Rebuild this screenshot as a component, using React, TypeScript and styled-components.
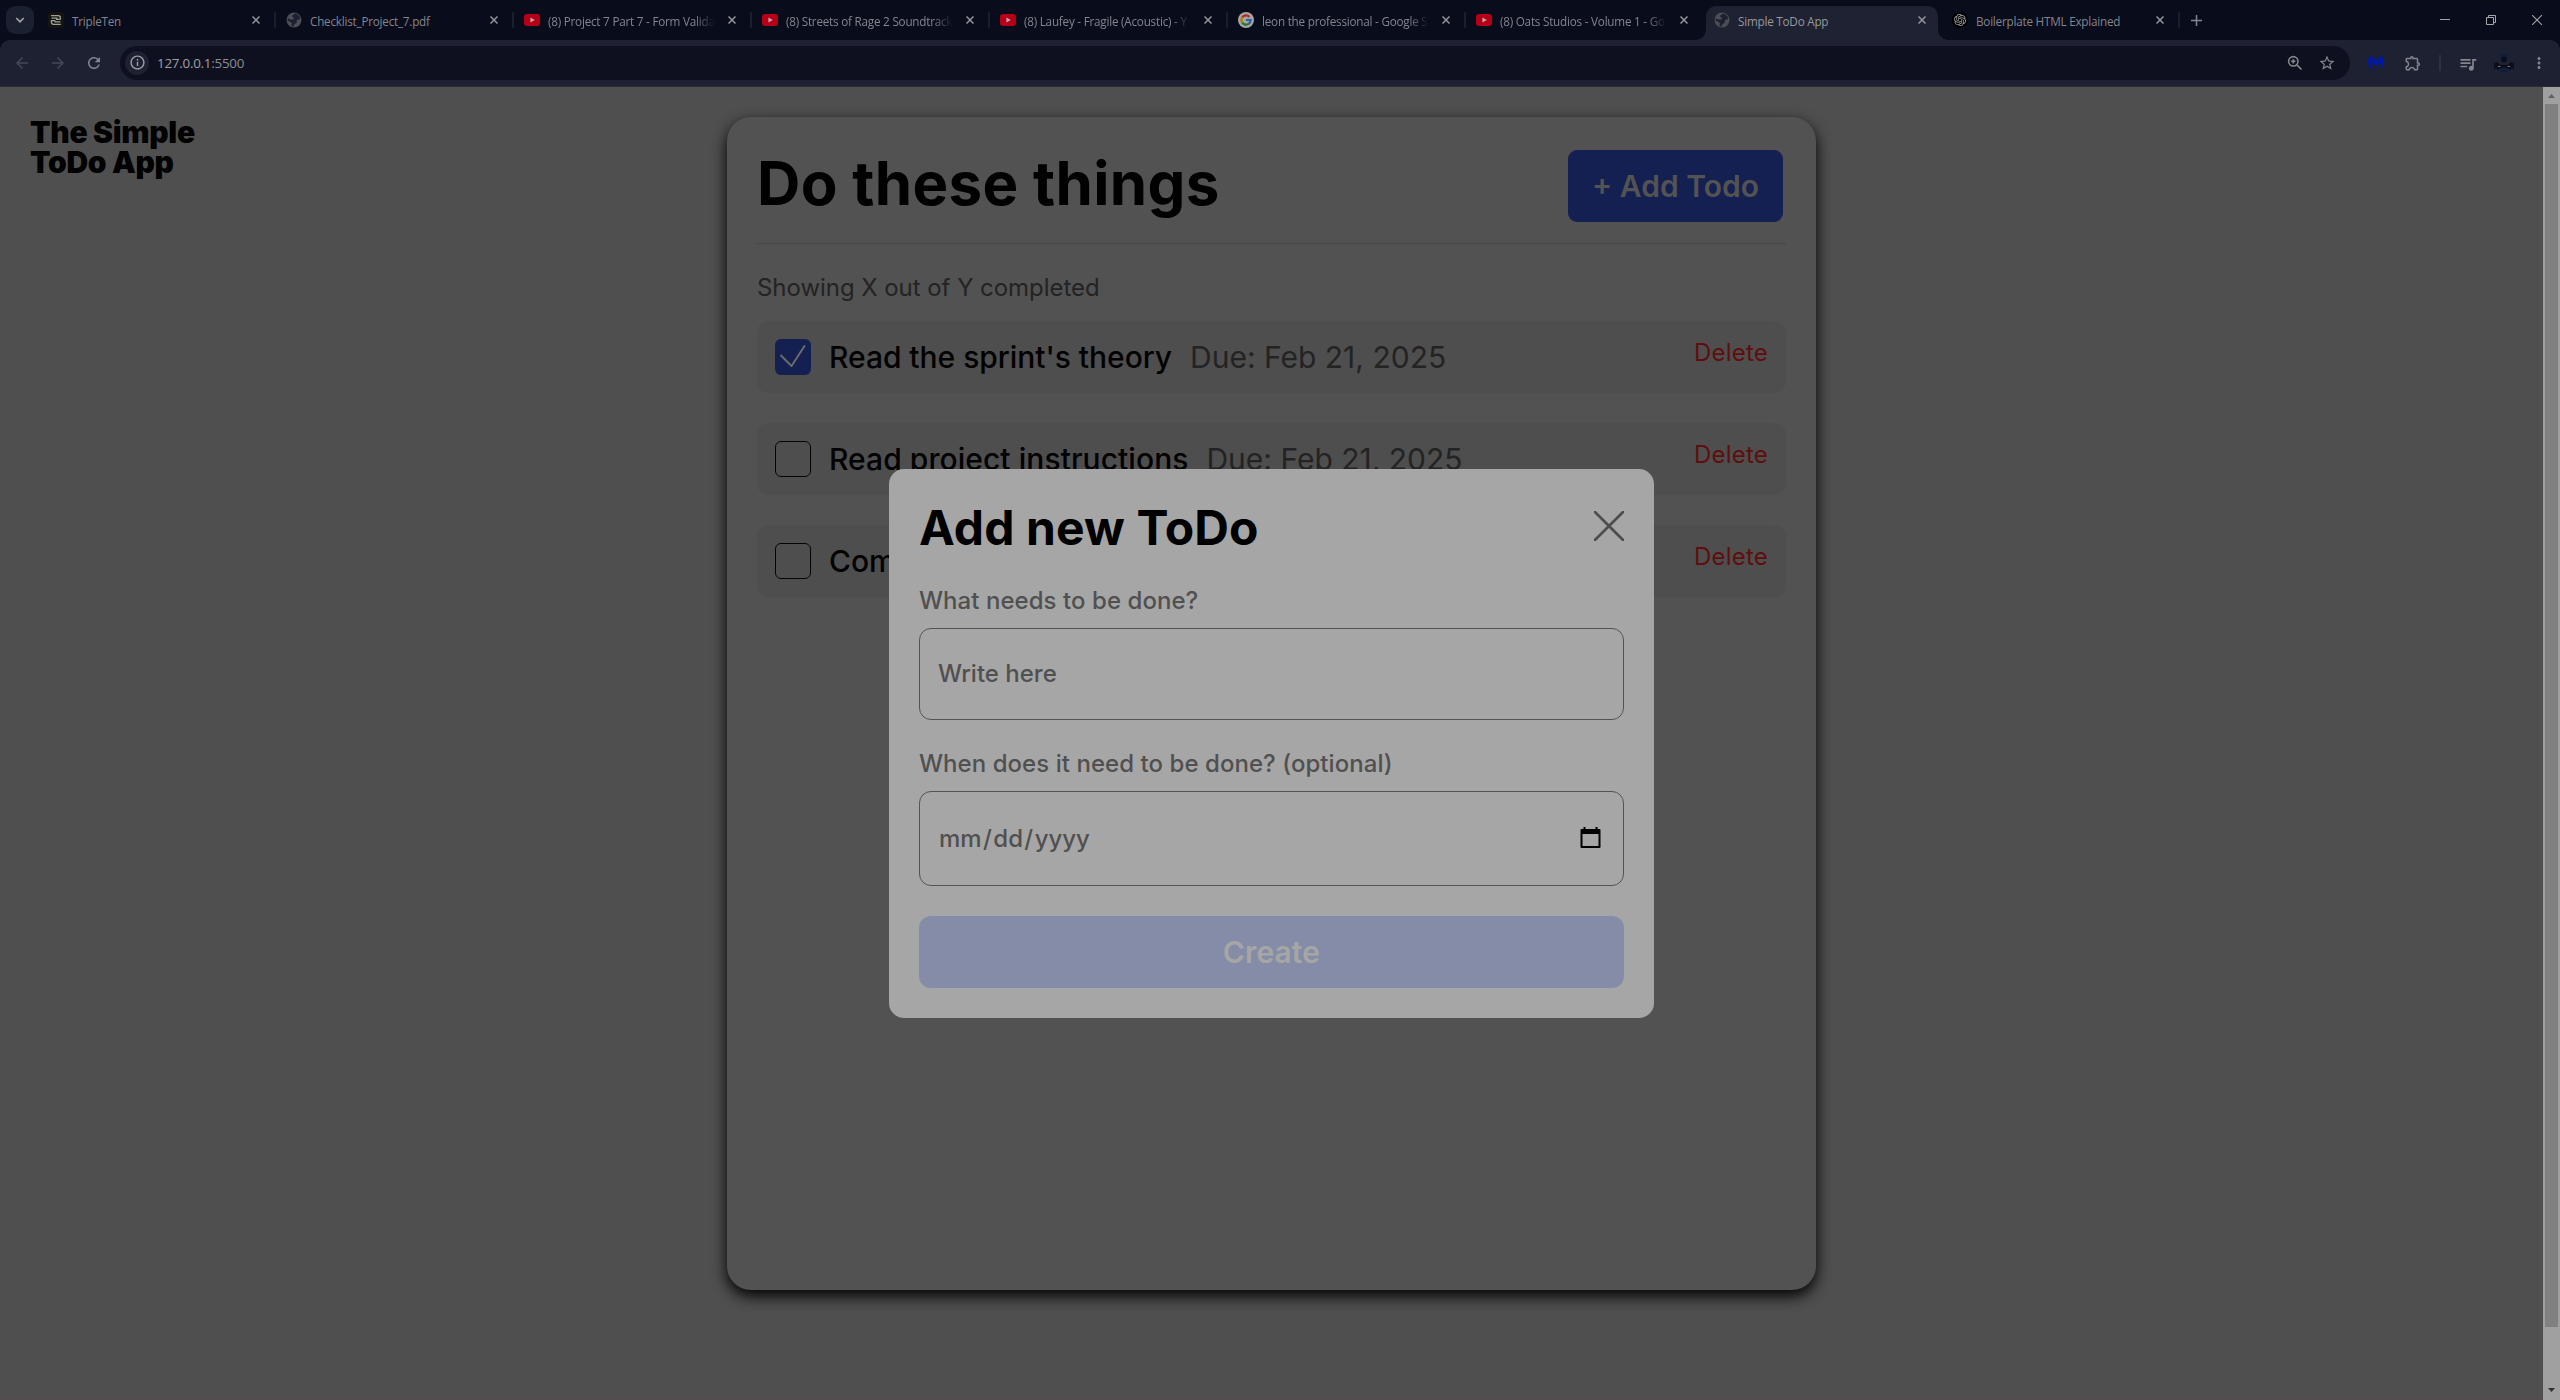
import React from "react";
import styled, { createGlobalStyle, css } from "styled-components";
import { MdOutlineExtension, MdQueueMusic, MdStarBorder, MdRefresh, MdArrowBack, MdArrowForward, MdOutlineInfo, MdMoreVert } from "react-icons/md";
import { SiOpenai, SiMalwarebytes } from "react-icons/si";

const GlobalStyle = createGlobalStyle`
  * { box-sizing: border-box; }
  body { margin: 0; overflow: hidden; font-family: Inter, "Liberation Sans", sans-serif; }
  h1, h2, p, ul { margin: 0; padding: 0; font-weight: inherit; }
`;

const Window = styled.div`
  display: flex;
  flex-direction: column;
  width: 2560px;
  height: 1400px;
  background: #4f4f4f;
`;

/* ---------- browser chrome ---------- */

const TabStrip = styled.div`
  display: flex;
  align-items: flex-start;
  height: 40px;
  padding: 6px 0 0 6px;
  background: #090c1a;
  font-family: "Open Sans", "Noto Sans", sans-serif;
`;

const TabSearch = styled.div`
  display: grid;
  place-items: center;
  width: 28px;
  height: 28px;
  margin-right: 6px;
  border-radius: 9px;
  background: #1b2030;
`;

const TabBox = styled.div<{ $active?: boolean }>`
  position: relative;
  display: flex;
  align-items: center;
  width: 232px;
  height: 34px;
  margin-right: 6px;
  padding: 0 8px 6px 8px;
  border-radius: 10px 10px 0 0;
  color: ${(p) => (p.$active ? "#99999d" : "#83858f")};
  background: ${(p) => (p.$active ? "#1e2232" : "transparent")};
  ${(p) =>
    p.$active &&
    css`
      &::before,
      &::after {
        content: "";
        position: absolute;
        bottom: 0;
        width: 10px;
        height: 10px;
      }
      &::before {
        left: -10px;
        background: radial-gradient(circle at 0 0, transparent 9.5px, #1e2232 10px);
      }
      &::after {
        right: -10px;
        background: radial-gradient(circle at 100% 0, transparent 9.5px, #1e2232 10px);
      }
    `}
`;

const Favicon = styled.span`
  display: grid;
  place-items: center;
  flex: none;
  width: 16px;
  height: 16px;
  margin-right: 8px;
`;

const TabTitle = styled.span<{ $fade?: boolean }>`
  flex: 1;
  height: 18px;
  margin-top: 2px;
  overflow: hidden;
  white-space: nowrap;
  font-size: 11.7px;
  line-height: 18px;
  letter-spacing: -0.22px;
  ${(p) => p.$fade && "mask-image: linear-gradient(to right, #000 88%, transparent);"}
`;

const TabClose = styled.span`
  display: grid;
  place-items: center;
  width: 16px;
  height: 16px;
  margin-left: 9px;
  flex: none;
`;

const TabDivider = styled.span<{ $hidden?: boolean }>`
  width: 2px;
  height: 16px;
  margin: 6px 2px 0 -4px;
  background: ${(p) => (p.$hidden ? "transparent" : "#1b1e2e")};
`;

const TabSlot = styled.div`
  display: flex;
  width: 238px;
  flex: none;
`;

const NewTab = styled.div`
  display: grid;
  place-items: center;
  width: 28px;
  height: 28px;
`;

const WindowControls = styled.div`
  display: flex;
  align-items: center;
  gap: 36px;
  height: 28px;
  margin-left: auto;
  padding-right: 18px;
`;

const Toolbar = styled.div`
  display: flex;
  align-items: center;
  height: 47px;
  padding: 0 12px 1px 12px;
  background: #1d2132;
  border-bottom: 1px solid #292d38;
  border-radius: 10px 10px 0 0;
  color: #83858f;
`;

const ToolbarBack = styled.div`
  background: #090c1a;
`;

const NavButtons = styled.div`
  display: flex;
  gap: 16px;
  width: 108px;
`;

const NavIcon = styled.span<{ $dim?: boolean }>`
  display: grid;
  place-items: center;
  width: 20px;
  height: 20px;
  font-size: 18px;
  color: ${(p) => (p.$dim ? "#454955" : "#83858f")};
`;

const Omnibox = styled.div`
  display: flex;
  align-items: center;
  width: 2230px;
  height: 34px;
  padding: 0 14px 0 5px;
  border-radius: 17px;
  background: #0e1020;
  color: #85878d;
`;

const SiteInfo = styled.span`
  display: grid;
  place-items: center;
  width: 24px;
  height: 24px;
  margin-right: 8px;
  border-radius: 50%;
  background: #1d2132;
  color: #a0a0a3;
  font-size: 17px;
`;

const Url = styled.span`
  flex: 1;
  color: #a0a0a3;
  font: 13.4px/20px "Open Sans", "Noto Sans", sans-serif;
  letter-spacing: -0.25px;

  em {
    font-style: normal;
    color: #8b8d95;
  }
`;

const OmniActions = styled.span`
  display: flex;
  align-items: center;
  gap: 15px;
  font-size: 18px;
`;

const Extensions = styled.div`
  display: flex;
  align-items: center;
  flex: 1;
  padding-left: 17px;
`;

const ExtIcon = styled.span<{ $gap: number }>`
  display: grid;
  place-items: center;
  width: 18px;
  height: 18px;
  margin-right: ${(p) => p.$gap}px;
  font-size: 18px;
`;

const ExtDivider = styled.span`
  width: 2px;
  height: 16px;
  margin-right: 17px;
  background: #2d3140;
`;

/* ---------- page ---------- */

const Viewport = styled.div`
  display: flex;
  height: 1313px;
  background: #4f4f4f;
`;

const Page = styled.main`
  position: relative;
  width: 2543px;
  padding: 30px;
  border-bottom: 1px solid #544a4d;
`;

const Logo = styled.div`
  position: absolute;
  left: 30px;
  top: 30px;
  color: #010101;
  font-size: 30px;
  font-weight: 900;
  line-height: 30px;
  letter-spacing: -0.3px;
`;

const Card = styled.section`
  width: 1089px;
  height: 1173px;
  margin: 0 auto;
  padding: 33px 30px 0;
  border-radius: 24px;
  background: #525252;
  box-shadow: 0 6px 15px #000;
`;

const CardHeader = styled.header`
  display: flex;
  justify-content: space-between;
  height: 94px;
  padding-right: 3px;
  border-bottom: 1px solid #464646;
`;

const CardTitle = styled.h1`
  color: #010101;
  font-size: 60px;
  font-weight: 700;
  line-height: 66px;
  letter-spacing: 0.33px;
`;

const AddButton = styled.button`
  width: 215px;
  height: 72px;
  padding: 0;
  border: 0;
  border-radius: 9px;
  background: #142052;
  color: #535353;
  font: 600 30px/36px Inter, sans-serif;
`;

const Counter = styled.p`
  margin-top: 29px;
  height: 48px;
  color: #232323;
  font-size: 24px;
  line-height: 30px;
  letter-spacing: -0.05px;
`;

const TodoList = styled.ul`
  display: flex;
  flex-direction: column;
  gap: 30px;
  list-style: none;
`;

const TodoRow = styled.li`
  display: flex;
  align-items: center;
  height: 72px;
  padding: 0 18px;
  border-radius: 12px;
  background: #4e4e4e;
  font-size: 30px;
  line-height: 36px;
`;

const Checkbox = styled.span<{ $checked?: boolean }>`
  display: grid;
  place-items: center;
  width: 36px;
  height: 36px;
  margin-right: 18px;
  border: ${(p) => (p.$checked ? "0" : "1px solid #050505")};
  border-radius: 6px;
  background: ${(p) => (p.$checked ? "#142052" : "transparent")};
`;

const TodoName = styled.span<{ $track: number }>`
  margin-right: 18px;
  color: #010101;
  font-weight: 500;
  letter-spacing: ${(p) => p.$track}px;
`;

const TodoDate = styled.span`
  color: #232323;
`;

const DeleteButton = styled.button`
  align-self: flex-start;
  margin: 17px 0 0 auto;
  padding: 0;
  border: 0;
  background: none;
  color: #5e0e0e;
  font: 400 24px/30px Inter, sans-serif;
  letter-spacing: 0.2px;
`;

/* ---------- popup ---------- */

const Popup = styled.form`
  position: absolute;
  left: 889px;
  top: 382px;
  width: 765px;
  height: 549px;
  padding: 30px;
  border-radius: 15px;
  background: #a6a6a6;
  color: #505050;
`;

const PopupHeader = styled.header`
  display: flex;
  justify-content: space-between;
  align-items: flex-start;
  height: 86px;
`;

const PopupTitle = styled.h2`
  color: #000;
  font-size: 48px;
  font-weight: 700;
  line-height: 58px;
  letter-spacing: 0.1px;
`;

const CloseIcon = styled.svg`
  margin-top: 12px;
`;

const Field = styled.label`
  display: block;
  font-size: 24px;
  font-weight: 500;
  line-height: 32px;
  letter-spacing: 0.05px;
`;

const FieldBox = styled.span<{ $h: number; $gap: number }>`
  display: flex;
  align-items: center;
  justify-content: space-between;
  height: ${(p) => p.$h}px;
  margin: 11px 0 ${(p) => p.$gap}px;
  padding: 0 22px 0 18px;
  border: 1px solid #535353;
  border-radius: 12px;
  letter-spacing: 0;
`;

const DateParts = styled.span`
  display: flex;
  padding-left: 1px;

  span {
    padding-right: 1.4px;
  }
`;

const CalendarIcon = styled.svg`
  margin: 0 0 2px;
`;

const CreateButton = styled.button`
  display: block;
  width: 100%;
  height: 72px;
  border: 0;
  border-radius: 12px;
  background: #858ca7;
  color: #a6a6a6;
  font: 600 30px/36px Inter, sans-serif;
  letter-spacing: 0.1px;
`;

/* ---------- scrollbar ---------- */

const Scrollbar = styled.div`
  display: flex;
  flex-direction: column;
  align-items: center;
  width: 17px;
  background: #a0a0a0;
`;

const ScrollArrow = styled.svg`
  flex: none;
  width: 17px;
  height: 17px;
`;

const Thumb = styled.div`
  width: 13px;
  height: 1223px;
  margin-bottom: auto;
  background: #808080;
`;

type Kind = "tripleten" | "globe" | "youtube" | "google" | "openai";

function TabIcon({ kind }: { kind: Kind }) {
  if (kind === "youtube")
    return (
      <svg width="16" height="16" viewBox="0 0 16 16">
        <rect x="0" y="2" width="16" height="12" rx="3" fill="#b50018" />
        <path d="M6.4 5.4v5.2L10.8 8z" fill="#c4a5a8" />
      </svg>
    );
  if (kind === "google")
    return (
      <svg width="16" height="16" viewBox="0 0 16 16" fill="none" strokeWidth="2.2">
        <circle cx="8" cy="8" r="8" fill="#a5a5a5" />
        <path d="M11.400 4.900A4.600 4.600 0 0 0 4.200 5.400" stroke="#b02c22" />
        <path d="M4.200 5.400a4.600 4.600 0 0 0 0 5.200" stroke="#b08000" />
        <path d="M4.200 10.600a4.600 4.600 0 0 0 6.800.900" stroke="#23762f" />
        <path d="M8 8h4.600q0 2.300-1.600 3.500" stroke="#2a5cb0" />
      </svg>
    );
  if (kind === "openai")
    return (
      <svg width="16" height="16" viewBox="0 0 16 16">
        <circle cx="8" cy="8" r="8" fill="#000" />
        <g color="#a5a5a5" transform="translate(2 2)">
          <SiOpenai size={12} />
        </g>
      </svg>
    );
  if (kind === "tripleten")
    return (
      <svg width="16" height="16" viewBox="0 0 16 16" fill="none" stroke="#a0a09a" strokeWidth="1.3">
        <rect width="16" height="16" rx="3.5" fill="#15140f" stroke="none" />
        <path d="M3 3.700h7.200a2.200 2.200 0 0 1 2.200 2.200v1.300M3.500 6.100h6M12.800 12.300H5.600a2.200 2.200 0 0 1-2.200-2.200V8.600h4M12.500 9.900H6.500M8 7.400h4.500" />
      </svg>
    );
  return (
    <svg width="16" height="16" viewBox="0 0 16 16">
      <circle cx="8" cy="8" r="7.500" fill="#4b4e54" />
      <path d="M9.300 1.500 6.500 3.200 6.200 5 8 5.800 7.500 7.500H4.600L2 6.500 1.500 8.800l2.500.700 1.800 1.700L5.600 14l1.900.500 1-2.500 2.300-1.300-.3-1.900 1.700-1.300 1.800-.300-.400-2.700-2.100-1.900z" fill="#1c2030" />
    </svg>
  );
}

const tabs: { title: string; icon: Kind; fade?: boolean; active?: boolean; noDivider?: boolean }[] = [
  { title: "TripleTen", icon: "tripleten" },
  { title: "Checklist_Project_7.pdf", icon: "globe" },
  { title: "(8) Project 7 Part 7 - Form Valida", icon: "youtube", fade: true },
  { title: "(8) Streets of Rage 2 Soundtrack", icon: "youtube", fade: true },
  { title: "(8) Laufey - Fragile (Acoustic) - Y", icon: "youtube", fade: true },
  { title: "leon the professional - Google S", icon: "google", fade: true },
  { title: "(8) Oats Studios - Volume 1 - Go", icon: "youtube", fade: true, noDivider: true },
  { title: "Simple ToDo App", icon: "globe", active: true, noDivider: true },
  { title: "Boilerplate HTML Explained", icon: "openai" },
];

const todos = [
  { name: "Read the sprint's theory", date: "Due: Feb 21, 2025", done: true, track: -0.03 },
  { name: "Read project instructions", date: "Due: Feb 21, 2025", done: false, track: 0.06 },
  { name: "Complete project", date: "", done: false, track: 0 },
];

function Tab({ title, icon, fade, active, noDivider }: (typeof tabs)[number]) {
  return (
    <TabSlot>
      <TabBox $active={active}>
        <Favicon><TabIcon kind={icon} /></Favicon>
        <TabTitle $fade={fade}>{title}</TabTitle>
        <TabClose>
          <svg width="8" height="8" stroke="#94969d" strokeWidth="1.500"><path d="M.5.5l7 7M7.500.5l-7 7" /></svg>
        </TabClose>
      </TabBox>
      <TabDivider $hidden={noDivider} />
    </TabSlot>
  );
}

export default function App() {
  return (
    <Window>
      <GlobalStyle />
      <TabStrip>
        <TabSearch>
          <svg width="10" height="6" fill="none" stroke="#a0a0a3" strokeWidth="1.700"><path d="M1.200 1 5 4.700 8.800 1" /></svg>
        </TabSearch>
        {tabs.map((t) => <Tab key={t.title} {...t} />)}
        <NewTab>
          <svg width="11" height="11" stroke="#83858f" strokeWidth="1.500"><path d="M5.500 0v11M0 5.500h11" /></svg>
        </NewTab>
        <WindowControls>
          <svg width="10" height="10" stroke="#a5a5a8"><path d="M0 4.500h10" /></svg>
          <svg width="10" height="10" fill="none" stroke="#a5a5a8"><path d="M.5 2.500h7v7h-7zM2.500 2.500v-2h7v7h-2" /></svg>
          <svg width="10" height="10" stroke="#a5a5a8" strokeWidth="1.100"><path d="M0 0l10 10M10 0 0 10" /></svg>
        </WindowControls>
      </TabStrip>
      <ToolbarBack>
        <Toolbar>
          <NavButtons>
            <NavIcon $dim><MdArrowBack /></NavIcon>
            <NavIcon $dim><MdArrowForward /></NavIcon>
            <NavIcon><MdRefresh /></NavIcon>
          </NavButtons>
          <Omnibox>
            <SiteInfo><MdOutlineInfo /></SiteInfo>
            <Url>127.0.0.1<em>:5500</em></Url>
            <OmniActions>
              <svg width="16" height="16" fill="none" stroke="currentColor" strokeWidth="1.600">
                <circle cx="6.300" cy="6.300" r="4.700" />
                <path d="M9.700 9.700l4.800 4.800M6.300 4.200v4.200M4.200 6.300h4.200" />
              </svg>
              <MdStarBorder />
            </OmniActions>
          </Omnibox>
          <Extensions>
            <ExtIcon $gap={19}><SiMalwarebytes color="#0019a5" size={16} /></ExtIcon>
            <ExtIcon $gap={17}><MdOutlineExtension /></ExtIcon>
            <ExtDivider />
            <ExtIcon $gap={18}><MdQueueMusic size={20} /></ExtIcon>
            <ExtIcon $gap={18}>
              <svg width="20" height="18" viewBox="0 0 20 18">
                <path d="M7 0h6v4H7zM6 15h8v3H6z" fill="#08203f" />
                <path d="M8 3h4l1 3-1 2h-4L7 6zM0 9l3-1 3 3h8l3-3 3 1v7l-2-2-2 2-3-2H7l-3 2-2-2-2 2z" fill="#0b0d18" />
                <path d="M4 12.500h2.500M13.500 12.500H16" stroke="#6b7480" />
              </svg>
            </ExtIcon>
            <ExtIcon $gap={0}><MdMoreVert /></ExtIcon>
          </Extensions>
        </Toolbar>
      </ToolbarBack>
      <Viewport>
        <Page>
          <Logo>The Simple<br />ToDo App</Logo>
          <Card>
            <CardHeader>
              <CardTitle>Do these things</CardTitle>
              <AddButton>+ Add Todo</AddButton>
            </CardHeader>
            <Counter>Showing X out of Y completed</Counter>
            <TodoList>
              {todos.map((t) => (
                <TodoRow key={t.name}>
                  <Checkbox $checked={t.done}>
                    {t.done && (
                      <svg width="28" height="28" fill="none" stroke="#6b6b6b" strokeWidth="2" strokeLinecap="round" strokeLinejoin="round">
                        <path d="M2 12.500 12.500 23 25.500 3" />
                      </svg>
                    )}
                  </Checkbox>
                  <TodoName $track={t.track}>{t.name}</TodoName>
                  <TodoDate>{t.date}</TodoDate>
                  <DeleteButton>Delete</DeleteButton>
                </TodoRow>
              ))}
            </TodoList>
          </Card>
          <Popup>
            <PopupHeader>
              <PopupTitle>Add new ToDo</PopupTitle>
              <CloseIcon width="30" height="30" stroke="#4d4d4d" strokeWidth="2.700"><path d="M0 0l30 30M30 0 0 30" /></CloseIcon>
            </PopupHeader>
            <Field>
              What needs to be done?
              <FieldBox $h={92} $gap={28}>Write here</FieldBox>
            </Field>
            <Field>
              When does it need to be done? (optional)
              <FieldBox $h={95} $gap={30}>
                <DateParts><span>mm</span><span>/</span><span>dd</span><span>/</span><span>yyyy</span></DateParts>
                <CalendarIcon width="21" height="22" viewBox="0 0 21 22" fill="#000">
                  <path fillRule="evenodd" d="M3.500 0h2v2h10V0h2v2h2q1 0 1 1v17q0 1-1 1h-18q-1 0-1-1V3q0-1 1-1h2zM2.500 7v12h16V7z" />
                </CalendarIcon>
              </FieldBox>
            </Field>
            <CreateButton type="button">Create</CreateButton>
          </Popup>
        </Page>
        <Scrollbar>
          <ScrollArrow><path d="M5 11h7L8.500 7z" fill="#606060" /></ScrollArrow>
          <Thumb />
          <ScrollArrow><path d="M5 5h7L8.500 9z" fill="#303030" /></ScrollArrow>
        </Scrollbar>
      </Viewport>
    </Window>
  );
}
